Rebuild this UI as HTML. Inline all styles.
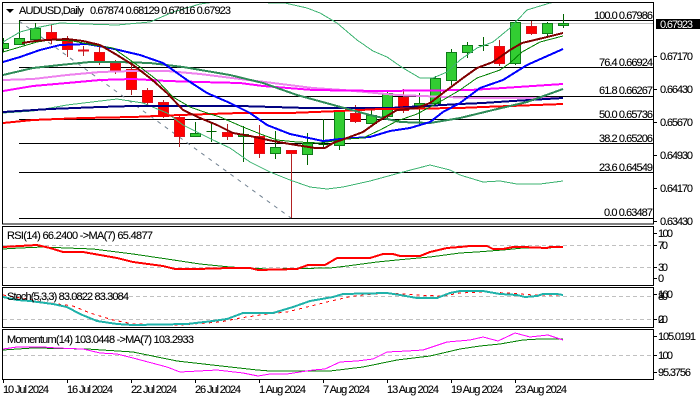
<!DOCTYPE html>
<html><head><meta charset="utf-8"><style>
html,body{margin:0;padding:0;background:#fff;width:700px;height:400px;overflow:hidden}
svg{display:block}
text{font-family:"Liberation Sans",sans-serif;font-size:11px;fill:#000;stroke:#000;stroke-width:.1}
.l{fill:none;shape-rendering:crispEdges}
.c{shape-rendering:crispEdges}
</style></head><body>
<svg width="700" height="400" viewBox="0 0 700 400" xmlns="http://www.w3.org/2000/svg">
<rect width="700" height="400" fill="#fff"/>
<defs><clipPath id="m"><rect x="3" y="3" width="651" height="221"/></clipPath></defs>
<g clip-path="url(#m)">
<path class="l" stroke="#c0c0c0" d="M3 23.5H654"/>
<path class="c" stroke="#000" fill="none" d="M19 20.5H654M19 67.5H654M19 96.5H654M19 119.5H654M19 143.5H654M19 172.5H654M19 218.5H654"/>
<path stroke="#708090" stroke-dasharray="4 5" fill="none" d="M19 21L291 218"/>
<!-- wicks -->
<path class="c" fill="none" stroke="#006400" d="M3.5 38V52M19.5 21V44M35.5 23V40M195.5 122V136M211.5 123V142M243.5 126V162M275.5 131V159M307.5 133V165M323.5 119V148M339.5 110V150M371.5 107V124M387.5 91V118M419.5 93V124M435.5 76V106M451.5 49V85M467.5 42V58M483.5 37V51M515.5 20V65M547.5 22V37M563.5 14V28"/>
<path class="c" fill="none" stroke="#b22222" d="M51.5 25V44M67.5 36V57M83.5 46V56M99.5 46V65M115.5 60V74M131.5 62V95M147.5 88V105M163.5 100V118M179.5 115V147M227.5 124V140M259.5 125V158M291.5 150V218M355.5 105V123M403.5 89V113M499.5 40V66M531.5 21V35"/>
<!-- bodies -->
<g class="c" fill="#32cd32" stroke="#0f7a1a">
<rect x="-1.5" y="43.5" width="10" height="5"/>
<rect x="14.5" y="38.5" width="10" height="6"/>
<rect x="30.5" y="28.5" width="10" height="11"/>
<rect x="190.5" y="133.5" width="10" height="3"/>
<path d="M206.5 131.5H216.5" fill="none" stroke="#006400"/>
<rect x="238.5" y="134.5" width="10" height="2"/>
<rect x="270.5" y="147.5" width="10" height="6"/>
<rect x="302.5" y="143.5" width="10" height="11"/>
<path d="M318.5 144.5H328.5" fill="none" stroke="#006400"/>
<rect x="334.5" y="111.5" width="10" height="34"/>
<rect x="366.5" y="115.5" width="10" height="8"/>
<rect x="382.5" y="93.5" width="10" height="23"/>
<rect x="414.5" y="103.5" width="10" height="4"/>
<rect x="430.5" y="78.5" width="10" height="25"/>
<rect x="446.5" y="52.5" width="10" height="28"/>
<rect x="462.5" y="45.5" width="10" height="7"/>
<path d="M478.5 45.5H488.5" fill="none" stroke="#006400"/>
<rect x="510.5" y="22.5" width="10" height="41"/>
<rect x="542.5" y="23.5" width="10" height="10"/>
<rect x="558.5" y="23.5" width="10" height="2"/>
</g>
<g class="c" fill="#ff0000" stroke="#e0101c">
<rect x="46.5" y="32.5" width="10" height="7"/>
<rect x="62.5" y="39.5" width="10" height="10"/>
<rect x="78.5" y="50" width="10" height="1"/>
<rect x="94.5" y="52.5" width="10" height="9"/>
<rect x="110.5" y="63.5" width="10" height="8"/>
<rect x="126.5" y="69.5" width="10" height="20"/>
<rect x="142.5" y="90.5" width="10" height="12"/>
<rect x="158.5" y="102.5" width="10" height="14"/>
<rect x="174.5" y="117.5" width="10" height="19"/>
<rect x="222.5" y="132.5" width="10" height="4"/>
<rect x="254.5" y="136.5" width="10" height="17"/>
<rect x="286.5" y="150.5" width="10" height="3"/>
<rect x="350.5" y="113.5" width="10" height="8"/>
<rect x="398.5" y="97.5" width="10" height="13"/>
<rect x="494.5" y="46.5" width="10" height="17"/>
<rect x="526.5" y="26.5" width="10" height="7"/>
</g>
<!-- bollinger -->
<polyline class="l" stroke="#3cb371" points="3,42 20,32 35,28 60,23 85,24 117,25 150,22 173,12 200,4 215,2 285,3 307,8 320,13 337,23 357,40 373,51 387,57 403,68 420,78 433,78 447,72 460,60 477,48 493,42 510,28 527,10 550,3 563,1"/>
<polyline class="l" stroke="#3cb371" points="3,113 33,111 67,105 117,99 143,103 167,113 183,125 213,140 230,148 250,162 270,172 290,180 310,187 327,189 343,187 370,181 403,172 430,165 450,170 460,175 483,182 500,181 517,184 540,184 563,181"/>
<!-- long MAs -->
<polyline class="l" stroke="#ee82ee" stroke-width="2" points="3,80 33,79 67,75 100,72 133,71 167,71 200,74 240,79 273,83 313,88 343,90 397,95 447,97 470,98 540,98 563,98"/>
<polyline class="l" stroke="#ff00ff" stroke-width="2" points="3,91 33,86 67,83 100,80 133,79 167,81 200,82 240,83 263,86 313,90 380,91 470,90 503,88 533,86 563,84"/>
<polyline class="l" stroke="#000080" stroke-width="2" points="3,112 50,109 100,107 133,106 240,106 307,108 390,108 460,104 483,103 513,101 563,98"/>
<polyline class="l" stroke="#ff0000" stroke-width="2" points="3,123 33,120 83,118 133,117 180,115 240,113 290,113 340,111 380,109 460,108 483,107 510,106 563,104"/>
<polyline class="l" stroke="#2e8b57" stroke-width="2" points="3,75 33,68 60,65 90,62 117,62 150,63 183,67 230,75 263,83 297,95 337,106 370,115 400,122 430,123 460,118 493,110 527,102 563,89"/>
<polyline class="l" stroke="#0000ff" stroke-width="2" points="3,62 20,57 40,50 60,45 87,44 110,48 140,55 163,63 187,80 207,93 230,103 250,113 267,125 290,134 323,141 340,139 370,137 390,131 410,128 430,122 443,112 460,103 480,88 503,80 527,65 563,49"/>
<polyline class="l" stroke="#008000" points="3,52 20,47 37,42 50,40 73,41 93,45 113,48 123,55 140,67 157,80 173,97 190,107 207,113 220,117 243,127 263,135 277,140 297,142 320,143 347,139 363,138 380,130 397,121 417,114 443,100 460,90 477,78 500,70 510,63 522,52 540,42 563,36"/>
<polyline class="l" stroke="#800000" stroke-width="2" points="22,43 35,41 47,40 67,39 83,41 100,45 117,55 133,65 150,78 167,93 183,110 200,118 217,125 233,133 250,136 273,141 290,144 315,148 325,148 333,143 347,138 363,132 377,122 397,110 417,108 430,103 447,90 463,78 477,68 493,62 510,50 522,43 543,38 563,33"/>
</g>
<!-- sub-window grid -->
<path class="l" stroke="#c0c0c0" stroke-dasharray="4 3" d="M3 245.5H654M3 267.5H654M3 296.5H654M3 319.5H654M3 355.5H654"/>
<!-- RSI -->
<polyline class="l" stroke="#008000" points="3,249 20,248 43,247 67,248 93,249 133,254 167,259 200,264 230,267 267,269 330,268 347,266 377,262 397,260 430,257 460,253 477,252 503,250 523,248 547,248 563,247"/>
<polyline class="l" stroke="#ff0000" stroke-width="2" points="3,247 20,246 37,245 50,248 63,252 83,252 100,255 117,258 133,262 163,266 175,269 197,269 230,268 250,268 258,270 297,269 308,265 325,265 337,258 370,258 383,254 393,254 400,256 420,256 430,252 447,248 460,247 470,246 487,246 493,249 503,249 513,247 523,247 547,248 550,247 563,247"/>
<!-- Stoch -->
<polyline class="l" stroke="#ff0000" stroke-dasharray="3 4" points="3,295 43,302 73,306 90,313 113,320 133,324 180,325 220,322 240,318 267,314 287,312 327,302 353,296 387,293 417,295 443,296 460,293 483,292 507,293 533,295 563,295"/>
<polyline class="l" stroke="#20b2aa" stroke-width="2" points="3,297 17,300 30,301 53,304 67,307 80,314 97,321 117,324 133,325 187,324 213,321 227,319 243,313 273,313 293,307 310,301 333,297 343,294 387,293 400,295 417,298 437,298 450,293 460,291 483,291 500,294 517,295 525,297 537,296 543,294 557,294 563,295"/>
<!-- Momentum -->
<polyline class="l" stroke="#008000" points="3,350 33,348 87,349 133,352 177,361 230,367 257,370 270,371 330,371 363,367 397,360 430,356 460,349 480,346 500,344 523,340 540,339 563,339"/>
<polyline class="l" stroke="#ff00ff" points="3,349 17,347 43,347 57,348 83,349 100,353 117,354 133,358 167,367 180,372 217,370 243,373 258,376 270,374 287,374 313,370 325,369 340,362 357,361 373,359 387,352 407,351 423,350 447,342 470,340 483,337 498,341 515,333 530,337 548,335 563,340"/>
<!-- frames -->
<g class="c" fill="none" stroke="#000">
<rect x="2.5" y="2.5" width="651" height="221.5"/>
<rect x="2.5" y="226.5" width="651" height="59"/>
<rect x="2.5" y="287.5" width="651" height="40"/>
<rect x="2.5" y="329.5" width="651" height="50"/>
<path d="M654 56.5h3M654 89.5h3M654 122.5h3M654 155.5h3M654 188.5h3M654 221.5h3M654 233.5h3M654 245.5h3M654 267.5h3M654 278.5h3M654 294.5h3M654 319.5h3M654 336.5h3M654 355.5h3M654 372.5h3"/>
<path d="M3.5 380v3M67.5 380v3M131.5 380v3M195.5 380v3M259.5 380v3M323.5 380v3M387.5 380v3M451.5 380v3M515.5 380v3"/>
</g>
<path d="M6 9h8l-4 4z" fill="#000"/>
<text x="19" y="14" textLength="65">AUDUSD,Daily</text>
<text x="90" y="14" textLength="141">0.67874 0.68129 0.67816 0.67923</text>
<!-- fibo labels -->
<text x="594" y="19" textLength="59">100.0 0.67986</text>
<text x="599" y="66" textLength="54">76.4 0.66924</text>
<text x="599" y="94" textLength="54">61.8 0.66267</text>
<text x="599" y="118" textLength="54">50.0 0.65736</text>
<text x="599" y="142" textLength="54">38.2 0.65206</text>
<text x="599" y="171" textLength="54">23.6 0.64549</text>
<text x="604" y="216" textLength="49">0.0 0.63487</text>
<!-- price scale -->
<rect x="656" y="19" width="44" height="10" fill="#000"/>
<text x="660" y="28" textLength="33" style="fill:#fff;stroke:none">0.67923</text>
<text x="660" y="60" textLength="33">0.67170</text>
<text x="660" y="93" textLength="33">0.66430</text>
<text x="660" y="126" textLength="33">0.65670</text>
<text x="660" y="159" textLength="33">0.64930</text>
<text x="660" y="192" textLength="33">0.64170</text>
<text x="660" y="225" textLength="33">0.63430</text>
<!-- indicator labels -->
<text x="7" y="239" textLength="146">RSI(14) 66.2400  -&gt;MA(7) 65.4877</text>
<text x="7" y="300" textLength="122">Stoch(5,3,3) 83.0822 83.3084</text>
<text x="7" y="343" textLength="187">Momentum(14) 103.0448  -&gt;MA(7) 103.2933</text>
<text x="658" y="237" textLength="15">100</text>
<text x="658" y="249" textLength="10">70</text>
<text x="658" y="271" textLength="10">30</text>
<text x="658" y="282">0</text>
<text x="658" y="298" textLength="15">100</text>
<text x="658" y="300" textLength="10">80</text>
<text x="658" y="323" textLength="10">20</text>
<text x="658" y="323">0</text>
<text x="658" y="340" textLength="38">105.0191</text>
<text x="658" y="359" textLength="15">100</text>
<text x="658" y="376" textLength="33">95.3756</text>
<!-- date axis -->
<text x="3" y="393" textLength="46">10 Jul 2024</text>
<text x="67" y="393" textLength="46">16 Jul 2024</text>
<text x="131" y="393" textLength="46">22 Jul 2024</text>
<text x="195" y="393" textLength="46">26 Jul 2024</text>
<text x="259" y="393" textLength="47">1 Aug 2024</text>
<text x="323" y="393" textLength="47">7 Aug 2024</text>
<text x="387" y="393" textLength="52">13 Aug 2024</text>
<text x="451" y="393" textLength="52">19 Aug 2024</text>
<text x="515" y="393" textLength="52">23 Aug 2024</text>
</svg>
</body></html>
